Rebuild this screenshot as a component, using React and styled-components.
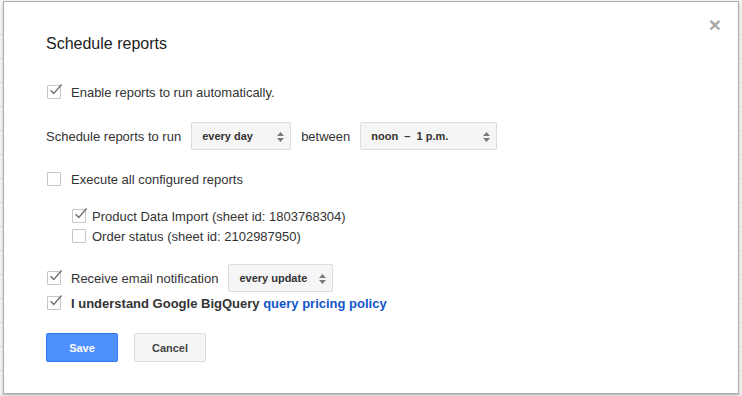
import React, { useState } from "react";
import styled, { createGlobalStyle } from "styled-components";

const GlobalStyle = createGlobalStyle`
  html, body {
    margin: 0;
    padding: 0;
    background-color: #f7f7f7;
    background-image: repeating-linear-gradient(
      to bottom,
      transparent 0,
      transparent 23px,
      #e2e2e2 23px,
      #e2e2e2 24px
    );
    background-position: 0 11px;
    font-family: "Liberation Sans", Arial, sans-serif;
  }
`;

const Page = styled.div`
  width: 742px;
  height: 396px;
  padding: 1px 3px 0 3px;
  box-sizing: border-box;
`;

const Dialog = styled.div`
  position: relative;
  box-sizing: border-box;
  width: 736px;
  height: 393px;
  background: #fff;
  border: 1px solid #acacac;
  box-shadow: 0 2px 4px rgba(0, 0, 0, 0.2);
  padding: 32px 42px 0 42px;
  color: #333;
  font-size: 13px;
`;

const Close = styled.button`
  position: absolute;
  top: 13px;
  right: 15px;
  border: 0;
  background: none;
  padding: 0;
  width: 16px;
  height: 20px;
  color: #a8a8a8;
  font-family: "Liberation Sans", Arial, sans-serif;
  font-size: 21px;
  font-weight: bold;
  line-height: 20px;
  cursor: pointer;
`;

const Title = styled.h1`
  margin: 0;
  font-size: 16px;
  font-weight: normal;
  line-height: 20px;
  color: #222;
`;

const Row = styled.div`
  display: flex;
  align-items: center;
  height: ${(p) => p.$h || 20}px;
  margin-top: ${(p) => p.$mt || 0}px;
  padding-left: ${(p) => p.$indent || 0}px;
  gap: ${(p) => p.$gap || 10}px;
`;

const Nested = styled.div`
  display: flex;
  flex-direction: column;
  margin-top: 17px;
`;

const Label = styled.span`
  font-weight: ${(p) => (p.$bold ? "bold" : "normal")};
  white-space: pre;
`;

const Link = styled.a`
  color: #15c;
  text-decoration: none;
  font-weight: bold;
`;

const Box = styled.span`
  position: relative;
  flex: none;
  width: 14px;
  height: 14px;
  box-sizing: border-box;
  margin-left: 1px;
  border: 1px solid #c6c6c6;
  border-radius: 1px;
  background: #fff;
  cursor: pointer;

  svg {
    position: absolute;
    left: 0;
    top: -4px;
  }
`;

const Check = ({ checked, onToggle }) => (
  <Box onClick={onToggle}>
    {checked && (
      <svg width="15" height="15" viewBox="0 0 15 15">
        <path
          d="M2.5 8.2 L5.8 11.4 L13.6 2.6"
          fill="none"
          stroke="#767676"
          strokeWidth="1.5"
        />
      </svg>
    )}
  </Box>
);

const Select = styled.div`
  position: relative;
  display: flex;
  align-items: center;
  box-sizing: border-box;
  width: ${(p) => p.$w}px;
  height: 28px;
  padding-left: 10px;
  border: 1px solid #dcdcdc;
  border-radius: 2px;
  background: #f5f5f5;
  color: #333;
  font-size: 11px;
  font-weight: bold;
  white-space: pre;
  cursor: default;

  svg {
    position: absolute;
    right: 6px;
    top: 9px;
  }
`;

const Dropdown = ({ w, children }) => (
  <Select $w={w}>
    {children}
    <svg width="7" height="10" viewBox="0 0 7 10">
      <path d="M0 4 L3.5 0 L7 4 Z M0 6 L3.5 10 L7 6 Z" fill="#7a7a7a" />
    </svg>
  </Select>
);

const Buttons = styled.div`
  display: flex;
  gap: 16px;
  margin-top: 20px;
`;

const Button = styled.button`
  box-sizing: border-box;
  width: 72px;
  height: 29px;
  border-radius: 2px;
  font-family: "Liberation Sans", Arial, sans-serif;
  font-size: 11px;
  font-weight: bold;
  cursor: pointer;
  border: 1px solid ${(p) => (p.$primary ? "#3079ed" : "#dcdcdc")};
  background: ${(p) => (p.$primary ? "#4d90fe" : "#f5f5f5")};
  color: ${(p) => (p.$primary ? "#fff" : "#444")};
`;

export default function App() {
  const [state, setState] = useState({
    enable: true,
    all: false,
    product: true,
    order: false,
    email: true,
    understand: true,
  });
  const toggle = (k) => () => setState({ ...state, [k]: !state[k] });

  return (
    <Page>
      <GlobalStyle />
      <Dialog>
        <Close>×</Close>
        <Title>Schedule reports</Title>

        <Row $mt={28}>
          <Check checked={state.enable} onToggle={toggle("enable")} />
          <Label>Enable reports to run automatically.</Label>
        </Row>

        <Row $h={28} $mt={20}>
          <Label>Schedule reports to run</Label>
          <Dropdown w={100}>every day</Dropdown>
          <Label>between</Label>
          <Dropdown w={137}>{"noon  \u2013  1 p.m."}</Dropdown>
        </Row>

        <Row $mt={19}>
          <Check checked={state.all} onToggle={toggle("all")} />
          <Label>Execute all configured reports</Label>
        </Row>

        <Nested>
          <Row $h={20} $indent={25} $gap={6}>
            <Check checked={state.product} onToggle={toggle("product")} />
            <Label>Product Data Import (sheet id: 1803768304)</Label>
          </Row>
          <Row $h={20} $indent={25} $gap={6}>
            <Check checked={state.order} onToggle={toggle("order")} />
            <Label>Order status (sheet id: 2102987950)</Label>
          </Row>
        </Nested>

        <Row $h={28} $mt={18}>
          <Check checked={state.email} onToggle={toggle("email")} />
          <Label>Receive email notification</Label>
          <Dropdown w={105}>every update</Dropdown>
        </Row>

        <Row $mt={1}>
          <Check checked={state.understand} onToggle={toggle("understand")} />
          <Label $bold>
            I understand Google BigQuery <Link href="#">query pricing policy</Link>
          </Label>
        </Row>

        <Buttons>
          <Button $primary>Save</Button>
          <Button>Cancel</Button>
        </Buttons>
      </Dialog>
    </Page>
  );
}
